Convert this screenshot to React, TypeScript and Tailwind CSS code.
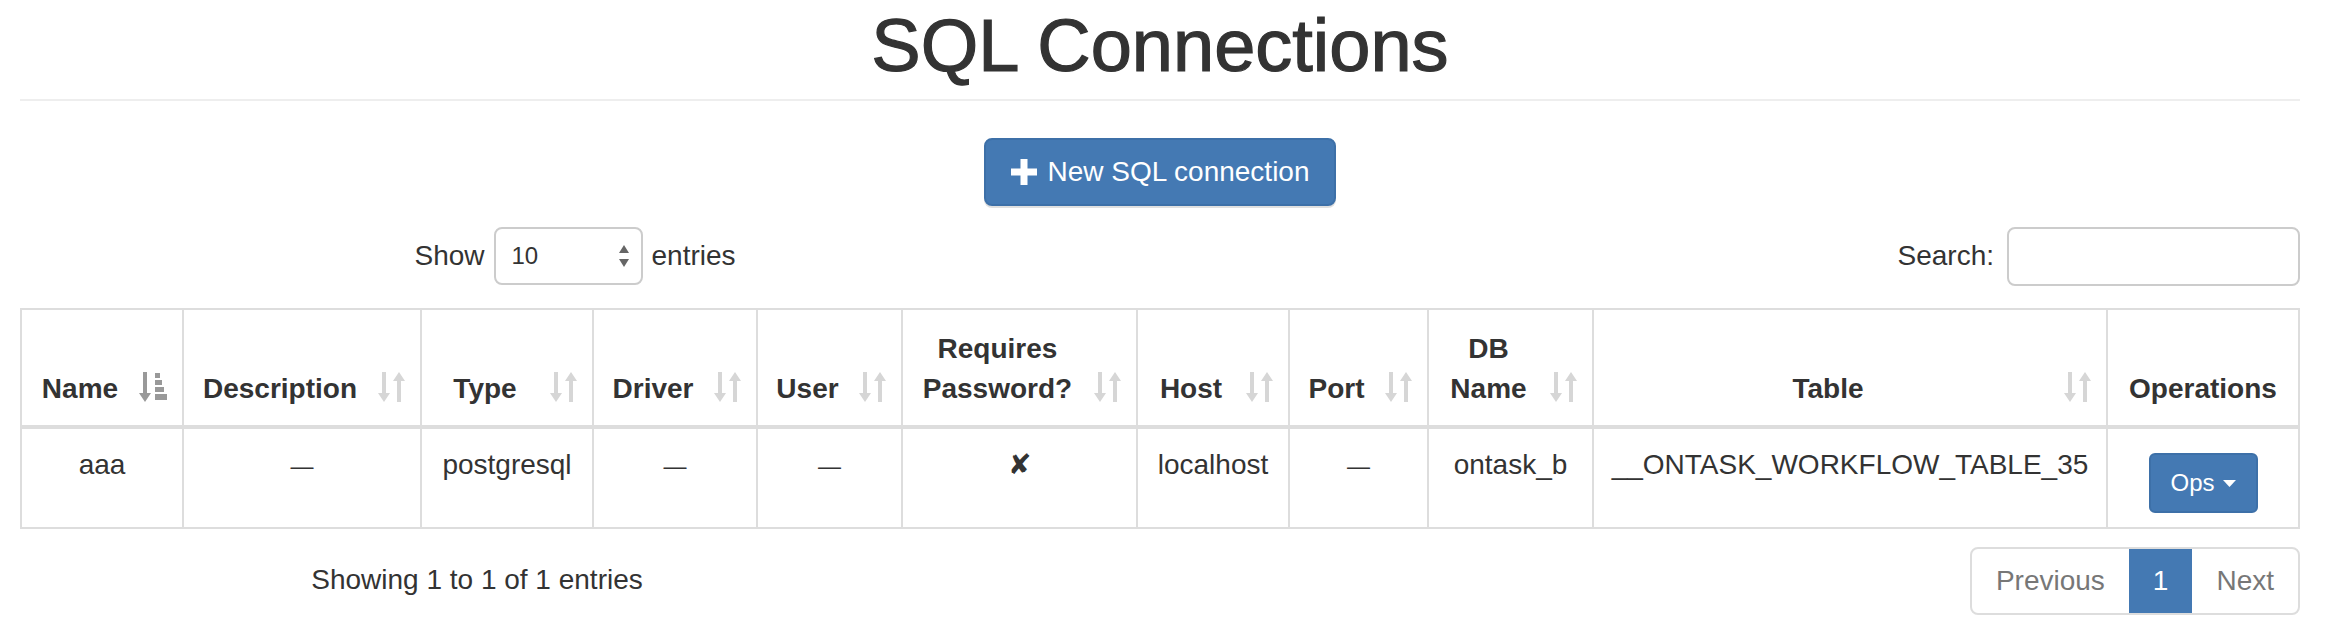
import React from "react";

type Col = { label: string; w: string; sort: "asc" | "both" | "none" };

const cols: Col[] = [
  { label: "Name", w: "w-[162px]", sort: "asc" },
  { label: "Description", w: "w-[238px]", sort: "both" },
  { label: "Type", w: "w-[172px]", sort: "both" },
  { label: "Driver", w: "w-[164px]", sort: "both" },
  { label: "User", w: "w-[145px]", sort: "both" },
  { label: "Requires Password?", w: "w-[235px]", sort: "both" },
  { label: "Host", w: "w-[152px]", sort: "both" },
  { label: "Port", w: "w-[139px]", sort: "both" },
  { label: "DB Name", w: "w-[165px]", sort: "both" },
  { label: "Table", w: "w-[514px]", sort: "both" },
  { label: "Operations", w: "w-[192px]", sort: "none" },
];

const row = [
  "aaa",
  "—",
  "postgresql",
  "—",
  "—",
  "✘",
  "localhost",
  "—",
  "ontask_b",
  "__ONTASK_WORKFLOW_TABLE_35",
];

const SortBoth = () => (
  <svg width="27" height="30" viewBox="0 0 27 30" fill="#d6d6d6">
    <path d="M4 0h4v21h4L6 30 0 21h4z" />
    <path d="M21 0l6 9h-4v21h-4V9h-4z" />
  </svg>
);

const SortAsc = () => (
  <svg width="28" height="30" viewBox="0 0 28 30" fill="#999">
    <path d="M4 0h4v21h4L6 30 0 21h4z" />
    <rect x="16" y="1" width="5" height="5" />
    <rect x="16" y="8" width="7" height="5" />
    <rect x="16" y="15" width="9" height="5" />
    <rect x="16" y="22" width="12" height="6" />
  </svg>
);

export default function App() {
  return (
    <div className="min-h-screen bg-white pl-[20px] pr-[28px] font-['Liberation_Sans',Arial,sans-serif] text-[28px] leading-[40px] text-[#333]">
      {/* HEADER */}
      <div className="mt-[6px] border-b-2 border-[#eee] pb-[13px]">
        <h1 className="text-center text-[74px] leading-[80px] font-normal [-webkit-text-stroke:1.2px_#333]">SQL Connections</h1>
      </div>

      {/* NEW BUTTON */}
      <div className="mt-[37px] flex justify-center">
        <button className="flex h-[68px] w-[352px] items-center justify-center gap-[11px] rounded-[8px] border-2 border-[#3d70a8] bg-[#4479b3] text-white shadow-[0_2px_0_rgba(0,0,0,0.12)]">
          <svg width="26" height="26" viewBox="0 0 26 26" fill="white">
            <path d="M9.5 0h7v9.5H26v7h-9.5V26h-7v-9.5H0v-7h9.5z" />
          </svg>
          <span>New SQL connection</span>
        </button>
      </div>

      {/* SHOW / SEARCH */}
      <div className="mt-[21px] flex h-[58px] items-center">
        <div className="flex w-[1110px] items-center justify-center">
          <span>Show</span>
          <div className="mx-[9px] flex h-[58px] w-[149px] items-center justify-between rounded-[8px] border-2 border-[#ccc] pl-[16px] pr-[12px] text-[24px]">
            <span>10</span>
            <svg width="10" height="22" viewBox="0 0 10 22" fill="#666">
              <path d="M5 0l5 8H0z" />
              <path d="M0 14h10l-5 8z" />
            </svg>
          </div>
          <span>entries</span>
        </div>
        <div className="ml-auto flex items-center">
          <span>Search:</span>
          <div className="ml-[13px] h-[59px] w-[293px] rounded-[8px] border-2 border-[#ccc]" />
        </div>
      </div>

      {/* TABLE */}
      <table className="mt-[23px] w-full table-fixed border-collapse border-2 border-[#ddd]">
        <colgroup>
          {cols.map((c) => (
            <col key={c.label} className={c.w} />
          ))}
        </colgroup>
        <thead>
          <tr>
            {cols.map((c) => (
              <th
                key={c.label}
                className={
                  c.sort === "none"
                    ? "relative border-2 border-b-4 border-[#ddd] px-[16px] pb-[16px] pt-[19px] text-center align-bottom font-bold"
                    : "relative border-2 border-b-4 border-[#ddd] pl-[16px] pr-[60px] pb-[16px] pt-[19px] text-center align-bottom font-bold"
                }
              >
                {c.label}
                {c.sort !== "none" && (
                  <span className="absolute bottom-[23px] right-[15px] flex">
                    {c.sort === "asc" ? <SortAsc /> : <SortBoth />}
                  </span>
                )}
              </th>
            ))}
          </tr>
        </thead>
        <tbody>
          <tr>
            {row.map((v, i) => (
              <td key={i} className="border-2 border-[#ddd] p-[16px] text-center align-top">
                {v === "—" ? <span className="text-[23px]">—</span> : v}
              </td>
            ))}
            <td className="border-2 border-[#ddd] px-[16px] pb-[14px] pt-[24px] text-center align-top">
              <button className="inline-flex h-[60px] w-[109px] items-center justify-center gap-[8px] rounded-[6px] border-2 border-[#3d70a8] bg-[#4479b3] text-[24px] text-white">
                Ops
                <svg width="13" height="7" viewBox="0 0 13 7" fill="white">
                  <path d="M0 0h13L6.5 7z" />
                </svg>
              </button>
            </td>
          </tr>
        </tbody>
      </table>

      {/* FOOTER */}
      <div className="mt-[18px] flex items-start">
        <div className="w-[914px] pt-[13px] text-center whitespace-nowrap">Showing 1 to 1 of 1 entries</div>
        <div className="ml-auto flex rounded-[8px] border-2 border-[#ddd]">
          <span className="px-[24px] py-[12px] text-[#777]">Previous</span>
          <span className="bg-[#4479b3] px-[24px] py-[12px] text-white">1</span>
          <span className="px-[24px] py-[12px] text-[#777]">Next</span>
        </div>
      </div>
    </div>
  );
}
